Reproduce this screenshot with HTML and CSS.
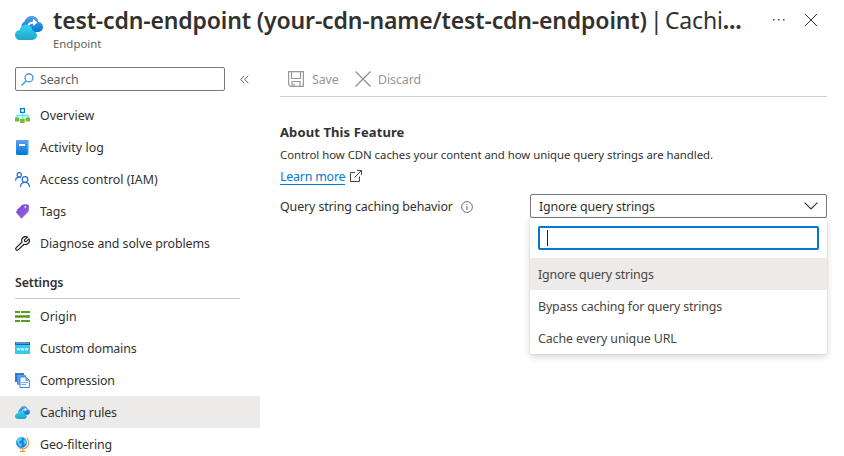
FILE: index.html
```html
<!DOCTYPE html>
<html lang="en">
<head>
<meta charset="utf-8">
<title>test-cdn-endpoint - Caching rules</title>
<link rel="stylesheet" href="styles.css">
</head>
<body>
<svg class="defs" aria-hidden="true">
  <defs>
    <linearGradient id="back" x1="0" y1="0" x2="0" y2="1"><stop offset="0" stop-color="#5ea0ef"/><stop offset="1" stop-color="#0078d4"/></linearGradient>
    <linearGradient id="front" x1="0" y1="0" x2="0" y2="1"><stop offset="0" stop-color="#32d4f5"/><stop offset="1" stop-color="#22a5cb"/></linearGradient>
    <linearGradient id="tag" x1="0" y1="0" x2="1" y2="1"><stop offset="0" stop-color="#7a3fe0"/><stop offset="1" stop-color="#9a72d0"/></linearGradient>
    <symbol id="cloud" viewBox="0 0 28 26">
      <path fill="url(#back)" d="M11 17C8 17 6.500 14 6.500 11.500C6.500 9 8 7 9.500 6.500C10.500 3 13.500 1 17 1C20.500 1 23 3.500 23.500 7C26 7.300 28 9.300 28 12C28 14.700 26 17 23 17Z"/>
      <path fill="none" stroke="#fff" stroke-width="1.800" d="M13 11C13.500 8.500 15.500 7.500 20 7.500"/>
      <path fill="#fff" d="M18 3.800L22.500 7.500L18 11.200Z"/>
      <path fill="url(#front)" d="M5.500 25C2.300 25 0 22.700 0 19.900C0 17.200 2 15.100 4.600 14.900C5.500 11.700 8 9.700 11.200 9.700C14.900 9.700 17.500 12.500 17.800 15.700C20.300 15.900 22 17.900 22 20.300C22 23 20 25 17.300 25Z"/>
    </symbol>
  </defs>
</svg>

<header class="header">
  <svg class="header-icon"><use href="#cloud"/></svg>
  <div class="heading">
    <h1 class="title"><span class="name">test-cdn-endpoint (your-cdn-name/test-cdn-endpoint)</span><span class="bar">|</span><span class="page">Cachi<b>...</b></span></h1>
    <div class="subtitle">Endpoint</div>
  </div>
  <svg class="more" viewBox="0 0 14 4"><path fill="#444" d="M1 1h1.500v1.500H1zM6 1h1.500v1.500H6zM11 1h1.500v1.500H11z"/></svg>
  <svg class="close" viewBox="0 0 14 14"><path d="M1 1L13 13M13 1L1 13" stroke="#323130" stroke-width="1"/></svg>
</header>

<div class="body">
  <nav class="sidebar">
    <div class="search-row">
      <div class="search">
        <svg class="search-icon" viewBox="0 0 13 13" fill="none" stroke="#1b7fd6" stroke-width="1.100"><circle cx="8" cy="4.900" r="4"/><path d="M5.200 7.800L.6 12.400"/></svg>
        <span class="search-text">Search</span>
      </div>
      <svg class="collapse" viewBox="0 0 9 9" fill="none" stroke="#605e5c" stroke-width="1"><path d="M4.300.7L.7 4.500L4.300 8.300M8.300.7L4.700 4.500L8.300 8.300"/></svg>
    </div>
    <ul class="menu">
      <li class="item"><svg class="icon" viewBox="0 0 15 15"><path d="M7.500 5V11M2 11V7.500H13V11" fill="none" stroke="#50e6ff" stroke-width="1.300"/><rect x="5.600" y=".6" width="3.800" height="3.800" fill="#fff" stroke="#0078d4" stroke-width="1.200"/><path fill="#76bc2d" d="M0 9.500h4.500v4H0zM5.200 11h4.500v4H5.200zM10.500 9.500H15v4h-4.500z"/></svg><span class="text wide">Overview</span></li>
      <li class="item"><svg class="icon" viewBox="0 0 15 15"><path fill="#0b64b4" d="M2 0H13.500V1H2z"/><rect x="3" y=".7" width="11" height="13.300" fill="#8ed0f5"/><path fill="url(#back)" d="M1.800 0H12.700V15H2.500Q1 15 1 13.500V1Q1 0 1.800 0Z"/><rect x="4" y="4" width="6" height="2" fill="#fff"/></svg><span class="text wide">Activity log</span></li>
      <li class="item"><svg class="icon" viewBox="0 0 15 15" fill="none" stroke="#2372d9" stroke-width="1.250"><circle cx="4.300" cy="2.800" r="2.200"/><path d="M.6 8.800C.6 6.500 2 5.100 4.200 5.100C5 5.100 5.600 5.300 6 5.600"/><circle cx="10" cy="7.500" r="2.800"/><path d="M5.500 15C5.500 12 7.200 10.300 10 10.300C12.800 10.300 14.400 12 14.400 15"/></svg><span class="text wide">Access control (IAM)</span></li>
      <li class="item"><svg class="icon" viewBox="0 0 15 15"><path fill="#5a28c8" d="M1.500 6.500L7.500.7L12.500.3L8 5Z"/><path fill="url(#tag)" d="M1.200 7.600L8 1.300L13.200.8Q14 .8 14 1.700L13.800 7.300L7 14.300Q6.500 14.700 6 14.200L1.400 8.800Q.8 8.100 1.200 7.600Z"/><circle cx="10.300" cy="2.800" r=".9" fill="#fff"/></svg><span class="text">Tags</span></li>
      <li class="item"><svg class="icon" viewBox="0 0 15 15" fill="none" stroke="#222" stroke-width="1.200" stroke-linejoin="round"><path d="M12.500 1.100C10.500.2 8.200.8 7.200 2.600C6.600 3.700 6.600 4.900 7 6L1.300 11.600C.5 12.400.5 13.300 1.200 13.900C1.900 14.500 2.700 14.400 3.400 13.700L9 8.200C10.600 8.800 12.400 8.400 13.500 7.200C14.600 6 14.700 4.400 14 2.900L11.300 5.600L9.700 5.300L9.500 3.900Z"/></svg><span class="text">Diagnose and solve problems</span></li>
    </ul>
    <h2 class="section">Settings</h2>
    <ul class="menu">
      <li class="item"><svg class="icon" viewBox="0 0 15 15"><path fill="#599e20" d="M0 2h5v2H0zM6 2h9v2H6zM0 11h5v2H0zM6 11h9v2H6z"/><path fill="#86b95a" d="M0 6h15v3H0z"/><path stroke="#4c8a1b" d="M0 7.500H12M13 6v3"/></svg><span class="text wide">Origin</span></li>
      <li class="item"><svg class="icon" viewBox="0 0 15 15"><path fill="#36c9ee" d="M0 2h15v10.500q0 .5-.5.5H.5q-.5 0-.5-.5z"/><path fill="#1266ad" d="M.5 1h14q.5 0 .5.500V4H0V1.500Q0 1 .5 1z"/><path stroke="#d9f2ff" stroke-width=".7" d="M1 2H14"/><path fill="none" stroke="#fff" stroke-width=".8" d="M2 7l.8 2.300L3.600 7.500l.8 1.800L5.200 7M6 7l.8 2.300L7.500 7.500l.8 1.800L9 7M10 7l.8 2.300.7-1.800.8 1.800L13 7"/></svg><span class="text tight">Custom domains</span></li>
      <li class="item"><svg class="icon" viewBox="0 0 15 15"><path fill="#2b7cd3" d="M0 0h9v11H2V9H0z"/><path fill="#5ea0ef" d="M2.500 2H11v10H2.500z"/><path fill="#f4faff" stroke="#2783de" stroke-width=".9" d="M5 4h6l3.500 3.500v7H5z"/><path fill="#5ea0ef" d="M10.500 4v4h4z"/><path stroke="#65b0ef" d="M6.500 9.500H13M6.500 11.500H11"/></svg><span class="text tight">Compression</span></li>
      <li class="item selected"><svg class="icon"><use href="#cloud"/></svg><span class="text tight">Caching rules</span></li>
      <li class="item"><svg class="icon" viewBox="0 0 15 15"><path fill="none" stroke="#e59a52" stroke-width="1.200" d="M11.500.7C14.400 2.700 14.500 7.500 12 10C9.600 12.300 6 12.200 3.800 10.500M7.700 11.500V14M5 14.400H10.500"/><circle cx="6.500" cy="5.500" r="5.400" fill="#1687df"/><path fill="#55cdf0" d="M2 2.500Q4.500-.5 7 .5L6.500 3L4 4.500L4.500 6L7 7L5.500 10Q3.500 8.500 3 6.500Q1.300 5 2 2.500zM9 2L11.500 4L11 7.500L9 6.500L8.500 4z"/></svg><span class="text">Geo-filtering</span></li>
    </ul>
  </nav>

  <main class="main">
    <div class="toolbar">
      <svg class="save-icon" viewBox="0 0 16 16" fill="none" stroke="#9a9896" stroke-width="1.200"><path d="M.6.6H15.400V15.400H2.600L.6 13.400ZM3.500.6V7.500H12.500V.6M4 15.400V10.500H12V15.400M6 12.500V15.400"/></svg>
      <span class="text save">Save</span>
      <svg class="discard-icon" viewBox="0 0 16 16" stroke="#8f8d8b" stroke-width="1.200"><path d="M.5.500L15.500 15.500M15.500.5L.5 15.500"/></svg>
      <span class="text discard">Discard</span>
    </div>
    <h2 class="about">About This Feature</h2>
    <p class="description">Control how CDN caches your content and how unique query strings are handled.</p>
    <div class="learn-row"><a class="learn">Learn more</a><svg class="external" viewBox="0 0 12 12" fill="none" stroke="#484644" stroke-width="1"><path d="M5 2.500H.5V11.500H9.500V6.500M4.500 7.500L11.300.7M7 .5H11.500V5"/></svg></div>
    <div class="field">
      <label class="text label">Query string caching behavior</label>
      <svg class="info" viewBox="0 0 12 12" fill="none" stroke="#605e5c"><circle cx="6" cy="6" r="5.400" stroke-width=".9"/><path d="M6 5V9M6 3V4"/></svg>
      <div class="dropdown">
        <div class="selectbox"><span class="text tight">Ignore query strings</span><svg class="chevron" viewBox="0 0 14 8" fill="none" stroke="#323130" stroke-width="1.100"><path d="M.6.700L7 7L13.400.7"/></svg></div>
        <div class="popup">
          <div class="filter"><span class="caret"></span></div>
          <div class="option active"><span class="text tight">Ignore query strings</span></div>
          <div class="option"><span class="text tight">Bypass caching for query strings</span></div>
          <div class="option"><span class="text">Cache every unique URL</span></div>
        </div>
      </div>
    </div>
  </main>
</div>
</body>
</html>
```
FILE: styles.css
```css
* { box-sizing: border-box; }
body {
  margin: 0;
  width: 844px;
  height: 456px;
  overflow: hidden;
  background: #fff;
  color: #323130;
  font: 12.4px/18px "Noto Sans", "Open Sans", sans-serif;
  white-space: nowrap;
}
h1, h2, p, ul { margin: 0; padding: 0; }
svg { display: block; flex: none; }
.defs { position: absolute; width: 0; height: 0; }
.text { padding-top: 2px; letter-spacing: -.08px; }
.tight { letter-spacing: -.16px; }
.wide { letter-spacing: .04px; }

.header { display: flex; height: 67px; padding-left: 15px; }
.header-icon { width: 28px; height: 26px; margin: 15px 10px 0 0; }
.heading { width: 719px; padding-top: 4px; }
.title { display: flex; font-size: 23px; line-height: 32px; font-weight: 600; letter-spacing: -.15px; }
.name { width: 597px; }
.bar { width: 15px; font-weight: 400; }
.page { font-weight: 400; letter-spacing: -.2px; }
.subtitle { font-size: 11.4px; line-height: 16px; color: #605e5c; }
.more { width: 14px; height: 4px; margin: 18px 18px 0 0; }
.close { width: 14px; height: 14px; margin-top: 13px; }

.body { display: flex; }
.sidebar { width: 260px; }
.search-row { display: flex; align-items: center; padding-left: 15px; }
.search { display: flex; align-items: center; width: 210px; height: 24px; border: 1px solid #7a7876; border-radius: 2px; padding-left: 5px; }
.search-icon { width: 13px; height: 13px; margin-right: 6px; }
.search-text { padding-top: 2px; letter-spacing: -.1px; color: #605e5c; }
.collapse { width: 9px; height: 9px; margin-left: 15px; }
.menu { list-style: none; }
.search-row + .menu { padding-top: 8px; }
.item { display: flex; align-items: center; height: 32px; padding-left: 15px; }
.selected { background: #edebe9; }
.icon { width: 15px; height: 15px; margin-right: 10px; }
.section { width: 225px; height: 40px; margin: 0 0 1px 15px; padding-top: 15px; border-bottom: 1px solid #c8c6c4; font-size: 12.4px; line-height: 18px; font-weight: 600; letter-spacing: -.15px; }

.main { width: 547px; margin-left: 20px; }
.toolbar { display: flex; align-items: center; height: 30px; padding: 0 0 6px 8px; border-bottom: 1px solid #d2d0ce; color: #979593; }
.save-icon { width: 16px; height: 16px; margin-right: 8px; }
.save { width: 43px; }
.discard-icon { width: 16px; height: 16px; margin-right: 7px; }
.about { margin-top: 26px; font-size: 13px; line-height: 18px; font-weight: 700; letter-spacing: .1px; }
.description { margin-top: 5px; font-size: 11.4px; line-height: 18px; letter-spacing: -.04px; }
.learn-row { display: flex; align-items: center; height: 22px; margin-top: 2px; }
.learn { color: #0078d4; border-bottom: 1px solid #0078d4; line-height: 15px; letter-spacing: -.2px; }
.external { width: 12px; height: 12px; margin: 0 0 3px 5px; }
.field { display: flex; align-items: center; height: 24px; margin-top: 6px; }
.label { width: 181px; letter-spacing: -.1px; }
.info { width: 12px; height: 12px; margin: 2px 57px 0 0; }
.dropdown { position: relative; width: 297px; }
.selectbox { display: flex; align-items: center; justify-content: space-between; height: 24px; padding: 0 8px; border: 1px solid #7a7876; border-radius: 2px; }
.chevron { width: 14px; height: 8px; }
.popup { position: absolute; top: 24px; left: 0; width: 297px; height: 136px; padding-top: 8px; background: #fff; border-radius: 0 0 2px 2px; box-shadow: 0 3px 7px rgba(0, 0, 0, .16), 0 0 2px rgba(0, 0, 0, .12); }
.filter { width: 281px; height: 24px; margin: 0 8px 8px; padding: 2px 0 0 7px; border: 2px solid #0078d4; border-radius: 2px; }
.caret { display: block; width: 1px; height: 16px; background: #222; }
.option { display: flex; align-items: center; height: 32px; padding-left: 8px; color: #484644; }
.active { background: #edebe9; }
```
